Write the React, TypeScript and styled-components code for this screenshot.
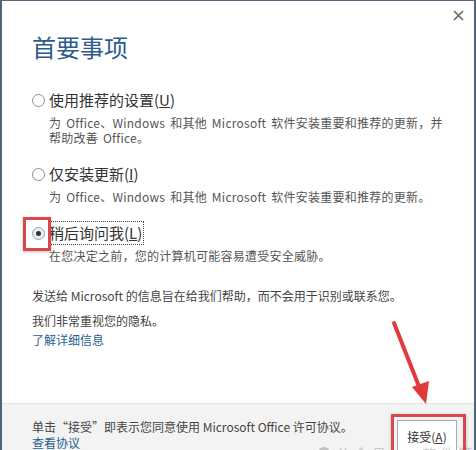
import React from 'react';

import styled, { createGlobalStyle } from 'styled-components';

const GlobalStyle = createGlobalStyle`
  html, body {
    margin: 0;
    padding: 0;
    background: #ffffff;
  }
  body {
    font-family: 'Noto Sans CJK SC', 'Noto Sans', sans-serif;
  }
`;

const Window = styled.div`
  position: relative;
  width: 476px;
  height: 450px;
  box-sizing: border-box;
  border-top: 1px solid #55697d;
  border-left: 2px solid #4f6479;
  border-right: 2px solid #4f6479;
  background: #ffffff;
  display: flex;
  flex-direction: column;
  overflow: hidden;
`;

const Header = styled.div`
  height: 29px;
  display: flex;
  justify-content: flex-end;
  align-items: center;
  padding-right: 10px;
`;

const CloseButton = styled.button`
  width: 12px;
  height: 12px;
  padding: 0;
  border: none;
  background: transparent;
  display: flex;
  align-items: center;
  justify-content: center;
`;

const Content = styled.div`
  flex: 1;
  padding: 0 26px 0 30px;
`;

const Title = styled.h1`
  margin: 1px 0 0;
  font-size: 24px;
  line-height: 32px;
  font-weight: 400;
  color: #2e5b8b;
`;

const OptionList = styled.div`
  margin-top: 25px;
  display: flex;
  flex-direction: column;
  gap: 17px;
`;

const Option = styled.div``;

const OptionRow = styled.label`
  display: flex;
  align-items: center;
`;

const Radio = styled.span<{ $checked?: boolean }>`
  width: 13px;
  height: 13px;
  box-sizing: border-box;
  border-radius: 50%;
  border: 1px solid ${p => (p.$checked ? '#9aa4ad' : '#8c8c8c')};
  background: ${p => (p.$checked ? '#e8eef3' : '#ffffff')};
  margin-right: 3px;
  display: flex;
  align-items: center;
  justify-content: center;
  &::after {
    content: '';
    width: 5px;
    height: 5px;
    border-radius: 50%;
    background: #2c3640;
    display: ${p => (p.$checked ? 'block' : 'none')};
  }
`;

const OptionLabel = styled.span<{ $focused?: boolean }>`
  font-size: 15px;
  line-height: 22px;
  color: #333333;
  padding: 0 1px 0 0;
  border: 1px ${p => (p.$focused ? 'dotted #444444' : 'solid transparent')};
`;

const Desc = styled.p`
  margin: 3px 0 0;
  padding-left: 17px;
  font-size: 12px;
  line-height: 15px;
  word-spacing: 2px;
  letter-spacing: 0.25px;
  color: #555555;
`;

const InfoText = styled.p<{ $gap: number }>`
  margin: ${p => p.$gap}px 0 0;
  font-size: 12px;
  line-height: 18px;
  color: #444444;
`;

const Link = styled.a`
  display: block;
  font-size: 12px;
  line-height: 18px;
  color: #2a5d8f;
  text-decoration: none;
  margin-top: 1px;
`;

const Footer = styled.div`
  height: 47px;
  box-sizing: border-box;
  border-top: 1px solid #e4e4e4;
  background: #f3f3f3;
  display: flex;
  justify-content: space-between;
  align-items: flex-start;
  padding: 15px 17px 0 30px;
`;

const FooterTextBlock = styled.div`
  display: flex;
  flex-direction: column;
`;

const FooterText = styled.span`
  font-size: 12px;
  line-height: 16px;
  color: #444444;
`;

const FooterLink = styled.a`
  font-size: 12px;
  line-height: 16px;
  color: #2a5d8f;
  text-decoration: none;
`;

const AcceptButton = styled.button`
  margin-top: 1px;
  width: 60px;
  height: 32px;
  box-sizing: border-box;
  border: 1px solid #ababab;
  background: #ffffff;
  font-family: inherit;
  font-size: 12px;
  color: #333333;
  padding: 0;
`;

const Underline = styled.span`
  text-decoration: underline;
`;

const Highlight = styled.div<{ $x: number; $y: number; $w: number; $h: number }>`
  position: absolute;
  left: ${p => p.$x}px;
  top: ${p => p.$y}px;
  width: ${p => p.$w}px;
  height: ${p => p.$h}px;
  box-sizing: border-box;
  border: 3px solid #d9474a;
  box-shadow: 0 1px 3px rgba(0, 0, 0, 0.25);
  pointer-events: none;
`;

const ArrowLayer = styled.svg`
  position: absolute;
  left: 0;
  top: 0;
  pointer-events: none;
`;

const Watermark = styled.div`
  position: absolute;
  left: 316px;
  top: 442px;
  display: flex;
  align-items: center;
  gap: 6px;
  font-size: 14px;
  letter-spacing: 4px;
  color: rgba(120, 120, 120, 0.4);
  white-space: nowrap;
  pointer-events: none;
`;

const WatermarkDot = styled.span`
  width: 12px;
  height: 12px;
  border-radius: 50%;
  background: rgba(120, 120, 120, 0.4);
`;

const options = [
  {
    label: '使用推荐的设置',
    key: 'U',
    desc: '为 Office、Windows 和其他 Microsoft 软件安装重要和推荐的更新，并帮助改善 Office。',
  },
  {
    label: '仅安装更新',
    key: 'I',
    desc: '为 Office、Windows 和其他 Microsoft 软件安装重要和推荐的更新。',
  },
  {
    label: '稍后询问我',
    key: 'L',
    desc: '在您决定之前，您的计算机可能容易遭受安全威胁。',
    checked: true,
  },
];

const App: React.FC = () => {
  return (
    <>
      <GlobalStyle />
      <Window>
        <Header>
          <CloseButton aria-label="关闭">
            <svg width="11" height="11" viewBox="0 0 11 11">
              <path d="M1 1L10 10M10 1L1 10" stroke="#666" strokeWidth="1.6" />
            </svg>
          </CloseButton>
        </Header>
        <Content>
          <Title>首要事项</Title>
          <OptionList>
            {options.map(o => (
              <Option key={o.key}>
                <OptionRow>
                  <Radio $checked={o.checked} />
                  <OptionLabel $focused={o.checked}>
                    {o.label}(<Underline>{o.key}</Underline>)
                  </OptionLabel>
                </OptionRow>
                <Desc>{o.desc}</Desc>
              </Option>
            ))}
          </OptionList>
          <InfoText $gap={24}>发送给 Microsoft 的信息旨在给我们帮助，而不会用于识别或联系您。</InfoText>
          <InfoText $gap={7}>我们非常重视您的隐私。</InfoText>
          <Link href="#">了解详细信息</Link>
        </Content>
        <Footer>
          <FooterTextBlock>
            <FooterText>单击“接受”即表示您同意使用 Microsoft Office 许可协议。</FooterText>
            <FooterLink href="#">查看协议</FooterLink>
          </FooterTextBlock>
          <AcceptButton>
            接受(<Underline>A</Underline>)
          </AcceptButton>
        </Footer>

        <Watermark>
          <WatermarkDot />
          公众号 · 软件管家
        </Watermark>
        <Highlight $x={21} $y={216} $w={28} $h={34} />
        <Highlight $x={389} $y={413} $w={75} $h={44} />
        <ArrowLayer width="476" height="450" viewBox="0 0 476 450">
          <line x1="392" y1="322" x2="418" y2="388" stroke="#e03a3e" strokeWidth="4" strokeLinecap="round" />
          <polygon points="424,403 410,386 427,380" fill="#e03a3e" />
        </ArrowLayer>
      </Window>
    </>
  );
};

export default App;
